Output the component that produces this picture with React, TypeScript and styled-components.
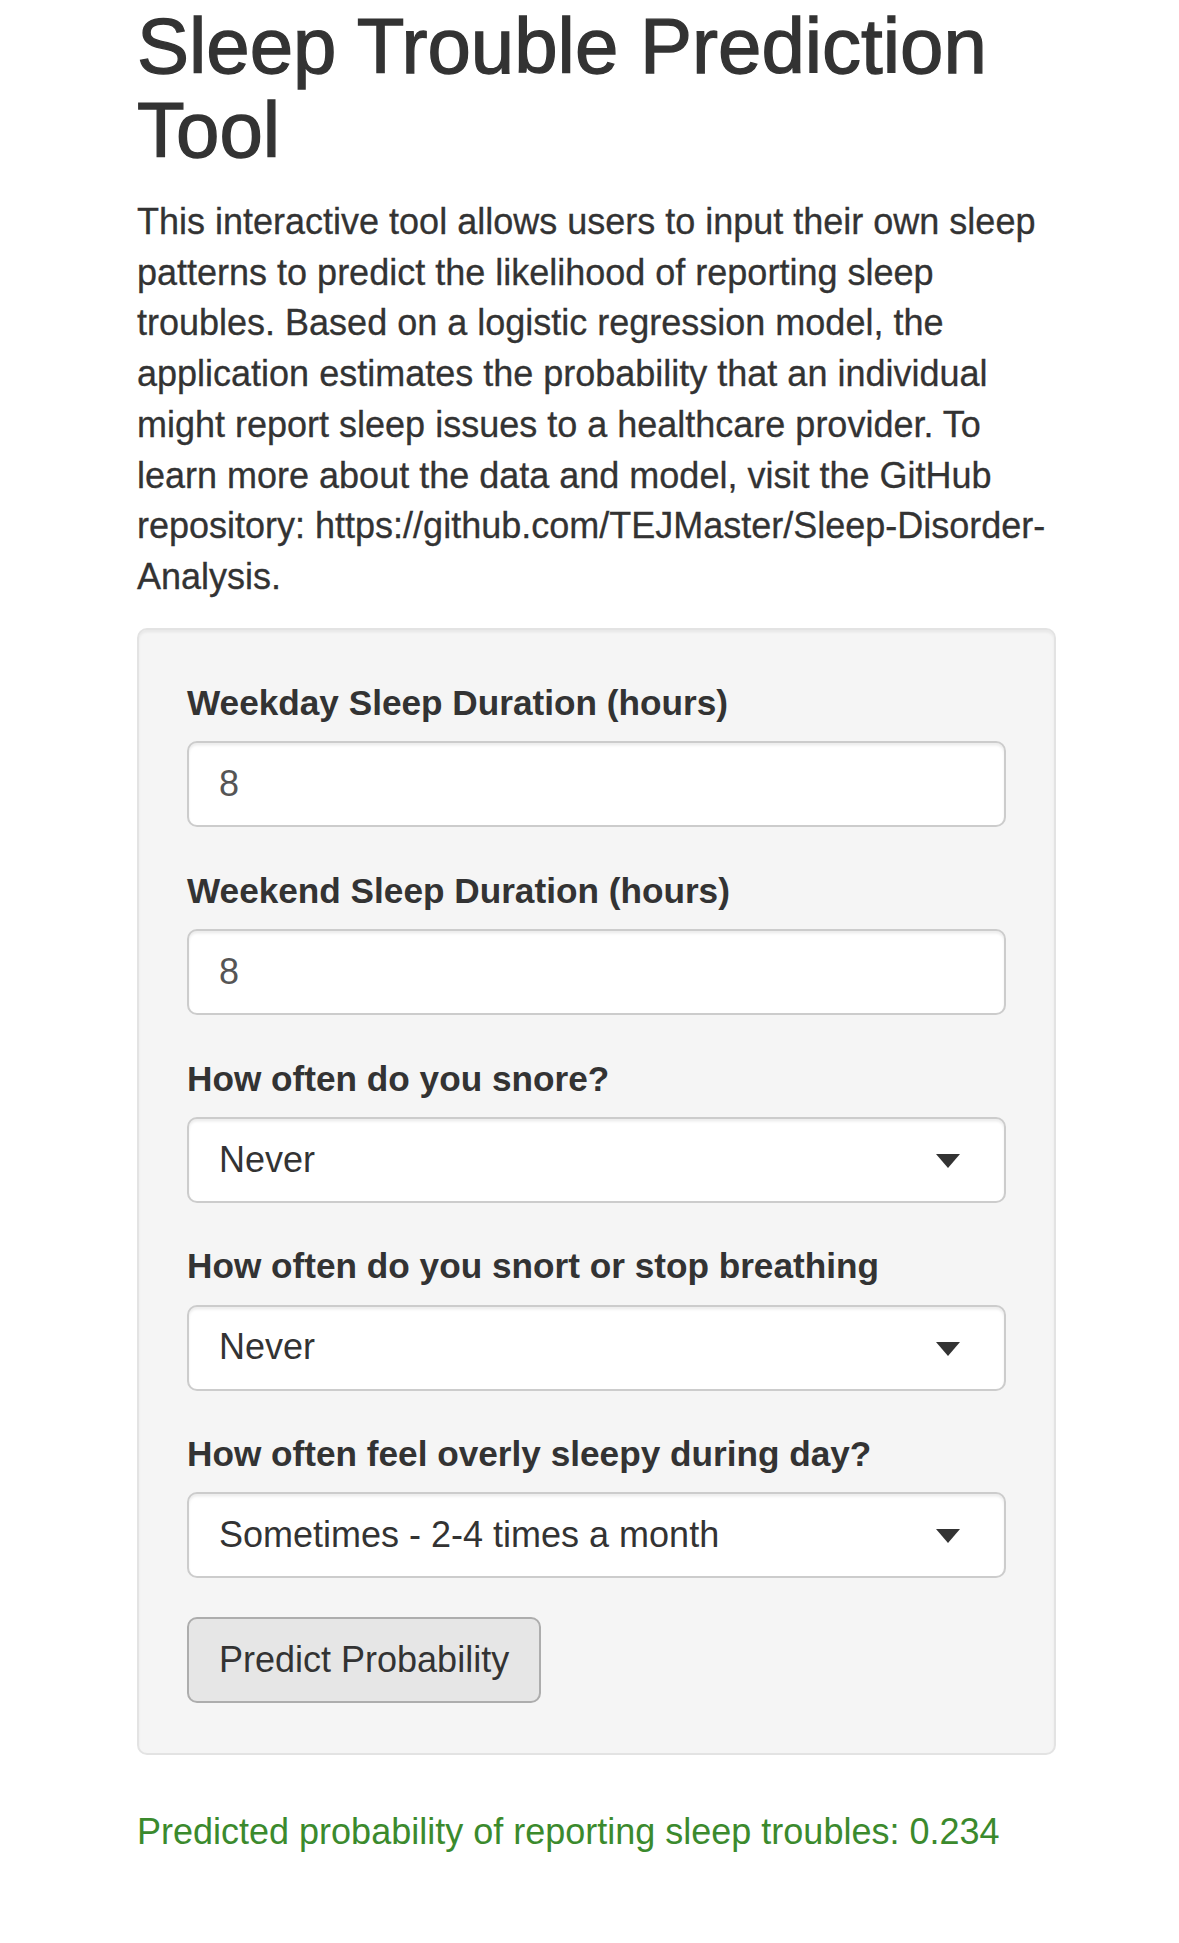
import React from "react";
import styled, { createGlobalStyle } from "styled-components";

const GlobalStyle = createGlobalStyle`
  html, body {
    margin: 0;
    padding: 0;
    background: #ffffff;
  }
  body {
    font-family: "Liberation Sans", Arial, Helvetica, sans-serif;
    color: #333333;
  }
  * { box-sizing: border-box; }
`;

const Page = styled.div`
  padding: 0 123px 0 137px;
  font-size: 36px;
  line-height: 50.6px;
`;

const Title = styled.h2`
  margin: 4px 0 25px;
  font-size: 78px;
  line-height: 84px;
  font-weight: 500;
  color: #333333;
  -webkit-text-stroke: 1.3px #333333;
`;

const Intro = styled.p`
  margin: 0 0 25px;
  font-size: 36px;
  line-height: 50.7px;
  color: #333333;
  -webkit-text-stroke: 0.3px #333333;
`;

const Well = styled.div`
  background: #f5f5f5;
  border: 2.5px solid #e3e3e3;
  border-radius: 10px;
  padding: 48.5px 48px 49.5px;
  margin-bottom: 52px;
  box-shadow: inset 0 2.5px 2.5px rgba(0, 0, 0, 0.05);
`;

const FormGroup = styled.div`
  margin-bottom: 38.6px;
`;

const Label = styled.label`
  display: block;
  font-weight: 700;
  font-size: 35.2px;
  line-height: 50.6px;
  margin-bottom: 12.6px;
  color: #333333;
`;

const Field = styled.div<{ $muted?: boolean }>`
  position: relative;
  display: flex;
  align-items: center;
  height: 86px;
  padding: 0 30px;
  background: #ffffff;
  border: 2.5px solid #cccccc;
  border-radius: 10px;
  box-shadow: inset 0 2.5px 2.5px rgba(0, 0, 0, 0.075);
  font-size: 36px;
  color: ${(p) => (p.$muted ? "#555555" : "#333333")};
`;

const Caret = styled.span`
  position: absolute;
  right: 44px;
  top: 35px;
  width: 0;
  height: 0;
  border-style: solid;
  border-width: 14px 12.5px 0 12.5px;
  border-color: #333333 transparent transparent transparent;
`;

const Button = styled.button`
  display: inline-flex;
  align-items: center;
  height: 86px;
  padding: 0 30px;
  background: #e6e6e6;
  border: 2.5px solid #adadad;
  border-radius: 10px;
  font-family: "Liberation Sans", Arial, Helvetica, sans-serif;
  font-size: 36px;
  color: #333333;
  cursor: pointer;
`;

const Result = styled.div`
  color: #3b8a2d;
  font-size: 36px;
  line-height: 50.6px;
`;

type Q = { label: string; value: string; kind: "number" | "select" };

const questions: Q[] = [
  { label: "Weekday Sleep Duration (hours)", value: "8", kind: "number" },
  { label: "Weekend Sleep Duration (hours)", value: "8", kind: "number" },
  { label: "How often do you snore?", value: "Never", kind: "select" },
  { label: "How often do you snort or stop breathing", value: "Never", kind: "select" },
  { label: "How often feel overly sleepy during day?", value: "Sometimes - 2-4 times a month", kind: "select" },
];

export default function App() {
  return (
    <>
      <GlobalStyle />
      <Page>
        <Title>Sleep Trouble Prediction Tool</Title>
        <Intro>
          This interactive tool allows users to input their own sleep patterns to predict the
          likelihood of reporting sleep troubles. Based on a logistic regression model, the
          application estimates the probability that an individual might report sleep issues to a
          healthcare provider. To learn more about the data and model, visit the GitHub repository:
          https://github.com/TEJMaster/Sleep-Disorder-Analysis.
        </Intro>
        <Well>
          {questions.map((q) => (
            <FormGroup key={q.label}>
              <Label>{q.label}</Label>
              <Field $muted={q.kind === "number"}>
                {q.value}
                {q.kind === "select" && <Caret />}
              </Field>
            </FormGroup>
          ))}
          <Button>Predict Probability</Button>
        </Well>
        <Result>Predicted probability of reporting sleep troubles: 0.234</Result>
      </Page>
    </>
  );
}
